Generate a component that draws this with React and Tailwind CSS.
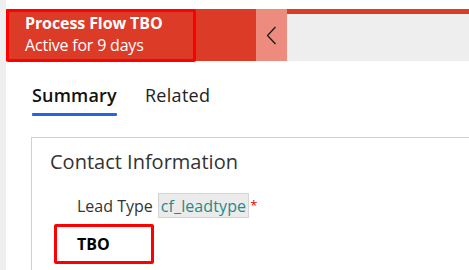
export default function App() {
  return (
    <div className="w-[469px] h-[270px] overflow-hidden bg-white flex" style={{ fontFamily: '"Open Sans", "Noto Sans", sans-serif' }}>
      <div className="w-[6px] shrink-0 bg-[#efefef]" />
      <div className="flex-1 flex flex-col min-w-0">
        <div className="mt-[9px] h-[52px] flex relative">
          <div className="w-[250px] bg-[#dc3b27] flex flex-col pl-[19px] pt-[3px] text-white">
            <div className="text-[16px] font-bold leading-[22px] tracking-[-0.1px]">Process Flow TBO</div>
            <div className="text-[16px] leading-[22px] tracking-[-0.2px]">Active for 9 days</div>
          </div>
          <div className="w-[31px] bg-[#ec8b7e] flex items-center justify-center">
            <svg width="11" height="19" viewBox="0 0 11 19" fill="none">
              <path d="M9.5 1 L1.5 9.5 L9.5 18" stroke="#1a1a1a" strokeWidth="1.3" />
            </svg>
          </div>
          <div className="flex-1 flex flex-col">
            <div className="h-[5px] bg-[#dc3b27]" />
            <div className="flex-1 bg-[#eeeeee]" />
          </div>
          <div className="absolute left-0 top-0 w-[190px] h-[53px] border-[3px] border-[#ff0000] rounded-[2px]" />
        </div>
        <div className="flex gap-[28px] pl-[26px] mt-[22px]">
          <div className="flex flex-col">
            <div className="text-[18px] font-semibold leading-[25px] text-[#111] tracking-[0.2px]">Summary</div>
            <div className="mt-[5px] h-[3px] bg-[#2266e3] rounded-[1px]" />
          </div>
          <div className="text-[18px] leading-[25px] text-[#222] tracking-[0.3px]">Related</div>
        </div>
        <div className="ml-[25px] mt-[21px] flex-1 border-l border-t border-[#d0d0d0] pl-[18px] pt-[10px]">
          <div className="text-[20px] leading-[28px] text-[#333]">Contact Information</div>
          <div className="mt-[17px] ml-[27px] flex items-center text-[16px] leading-[22px]">
            <span className="text-[#333]">Lead Type</span>
            <span className="ml-[5px] bg-[#ebebeb] border border-[#d4d4d4] px-[2px] h-[25px] flex items-center text-[#1f8a8a] tracking-[0.1px]">cf_leadtype</span>
            <span className="text-[#e00000] text-[13px] self-start mt-[1px] ml-[1px]">*</span>
          </div>
          <div className="mt-[6px] ml-[4px] w-[100px] h-[40px] border-[3px] border-[#ff0000] rounded-[2px] flex items-center pl-[20px]">
            <span className="text-[16px] font-bold text-black">TBO</span>
          </div>
        </div>
      </div>
    </div>
  );
}
